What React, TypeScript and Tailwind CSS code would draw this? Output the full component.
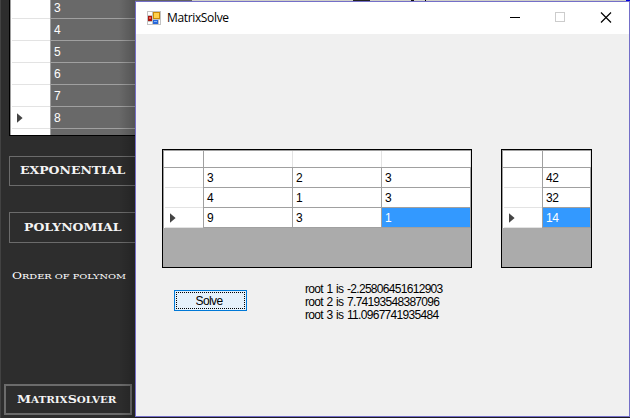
import React from "react";

const sans = "font-['Liberation_Sans',sans-serif]";
const cop = "font-['DejaVu_Serif',serif] font-bold text-[#f4f4f4] whitespace-nowrap";

function Pointer() {
  return (
    <svg width="6" height="10" viewBox="0 0 6 10">
      <path d="M0 0.3L5.6 5L0 9.7Z" fill="#444" />
    </svg>
  );
}

function DarkGrid() {
  return (
    <div className="ml-[9px] h-[136px] overflow-hidden border-b border-l border-black bg-white">
      {[3, 4, 5, 6, 7, 8, ""].map((n, i) => (
        <div key={i} className={`flex ${i === 0 ? "h-[19px]" : "h-[22px]"}`}>
          <div className="flex w-[41px] shrink-0 items-center border-r border-l border-r-[#a0a0a0] border-l-[#a0a0a0] pl-px">
            <div className="flex h-full w-full items-center border-b border-[#e3e3e3] pt-px pl-[5px]">
              {n === 8 && <Pointer />}
            </div>
          </div>
          <div className={`flex grow items-end border-b border-[#a0a0a0] bg-[#696969] pb-[3px] pl-[3px] leading-[14px] text-white ${sans} text-[12px]`}>
            {n}
          </div>
        </div>
      ))}
    </div>
  );
}

function DataGrid({ rows, columns }: { rows: string[][]; columns: string }) {
  return (
    <div className="h-[119px] border border-black bg-[#ababab]">
      <div className={`grid ${columns} h-[18px] border-y border-l border-[#a0a0a0] bg-white`}>
        <div className="border-r border-[#a0a0a0]" />
        {rows[0].map((_, i) => (
          <div key={i} className="border-r border-[#e3e3e3]" />
        ))}
      </div>
      {rows.map((row, r) => (
        <div key={r} className={`grid ${columns} h-5 border-l border-[#a0a0a0] bg-white`}>
          <div className="border-r border-[#a0a0a0] pl-px">
            <div className="flex h-full items-center border-b border-[#e3e3e3] pt-px pl-[5px]">
              {r === 2 && <Pointer />}
            </div>
          </div>
          {row.map((v, c) => (
            <div
              key={c}
              className={`border-r border-b border-[#a0a0a0] pt-[3px] pl-[3px] leading-[14px] ${sans} text-[12px] tracking-[-0.5px] ${r === 2 && c === row.length - 1 ? "bg-[#3399ff] text-white" : "text-black"}`}
            >
              {v}
            </div>
          ))}
        </div>
      ))}
    </div>
  );
}

function FormIcon() {
  return (
    <svg width="14" height="14" viewBox="0 0 14 14">
      <rect width="14" height="14" fill="#c3c3c3" />
      <path d="M1 1h4v3H1zM1 11h4v2H1zM12 9h1v4h-1z" fill="#fff" />
      <rect x="6" y="1" width="7" height="7" fill="#c98908" />
      <rect x="7" y="2" width="5" height="5" fill="#ffd04b" />
      <rect x="1" y="5" width="4" height="5" fill="#a81410" />
      <rect x="2" y="6" width="2" height="2" fill="#f0614d" />
      <rect x="6" y="9" width="5" height="4" fill="#2868d8" />
      <rect x="7" y="10" width="3" height="1" fill="#82b4ff" />
    </svg>
  );
}

export default function App() {
  return (
    <div className="relative flex h-[418px] w-[630px] overflow-hidden bg-[#2d2d2d]">
      <div className="relative h-[418px] w-[135px] overflow-hidden border-l border-[#424242]">
        <div className="-ml-px">
          <DarkGrid />
          <div className="mt-5 ml-[9px] flex h-[30px] items-center border border-r-0 border-[#6b6b6b] pl-[10px]">
            <span className={`${cop} inline-block origin-left scale-x-[1.135] text-[11px] leading-4`}>EXPONENTIAL</span>
          </div>
          <div className="mt-[26px] ml-[9px] flex h-[31px] items-center border border-r-0 border-[#6b6b6b] pl-[14px]">
            <span className={`${cop} inline-block origin-left scale-x-[1.135] text-[11px] leading-4`}>POLYNOMIAL</span>
          </div>
          <div className="mt-[25px] ml-3 h-[15px]">
            <span className="block w-max origin-left scale-x-[1.22] font-['DejaVu_Serif',serif] text-[10px] leading-[15px] font-normal whitespace-nowrap text-white">
              O<span className="text-[8px]">RDER OF POLYNOM</span>
            </span>
          </div>
          <div className="mt-[101px] ml-1 flex h-[31px] w-32 items-center border-2 border-[#6b6b6b] pt-px pl-[11px]">
            <span className={`${cop} inline-block origin-left scale-x-[1.15] text-[11px] leading-4`}>
              M<span className="text-[9px]">ATRIX</span>S<span className="text-[9px]">OLVER</span>
            </span>
          </div>
        </div>
        <div className="absolute inset-y-0 right-0 w-4 bg-gradient-to-r from-transparent to-black/20" />
      </div>

      <div className="flex w-[495px] flex-col bg-[#1d1a22]">
        <div className="flex h-px bg-[#d0d0c8]">
          <div className="w-[57px] bg-[#626262]" />
          <div className="ml-[161px] w-[17px] bg-[#222]" />
          <div className="ml-[41px] w-[3px] bg-[#111]" />
          <div className="ml-[11px] w-px bg-black" />
          <div className="ml-auto w-1 bg-[#0000e0]" />
        </div>
        <div className="flex h-[416px] flex-col border border-[#746fc8] bg-[#f0f0f0]">
          <div className="flex h-8 items-center bg-white pl-[11px]">
            <FormIcon />
            <span className="ml-[6px] font-['Open_Sans','Noto_Sans',sans-serif] text-[12px] leading-4 tracking-[-0.35px] text-black">MatrixSolve</span>
            <svg className="ml-auto" width="120" height="32" viewBox="0 0 120 32" fill="none">
              <path d="M1 15.5h10" stroke="#000" />
              <rect x="46.5" y="10.5" width="9" height="9" stroke="#ccc" />
              <path d="M92 10.5l10 10M102 10.5l-10 10" stroke="#000" strokeWidth="1.2" />
            </svg>
          </div>
          <div className="mt-[115px] flex pl-[26px]">
            <div className="w-[310px]">
              <DataGrid columns="grid-cols-[40px_89px_89px_89px]" rows={[["3", "2", "3"], ["4", "1", "3"], ["9", "3", "1"]]} />
            </div>
            <div className="ml-[29px] w-[91px]">
              <DataGrid columns="grid-cols-[40px_48px]" rows={[["42"], ["32"], ["14"]]} />
            </div>
          </div>
          <div className={`flex pl-[38px] ${sans} text-black`}>
            <button className="mt-[22px] h-[21px] w-[73px] border border-[#0078d7] bg-[#e5f1fb] p-px">
              <span className="flex h-full items-center justify-center border border-dotted border-black pr-[3px] text-[12px] leading-[14px] tracking-[-0.6px]">Solve</span>
            </button>
            <div className="mt-[15px] ml-[58px] text-[12px] leading-[13px] tracking-[-0.7px] [word-spacing:1px] whitespace-nowrap">
              <div>root 1 is -2.25806451612903</div>
              <div>root 2 is 7.74193548387096</div>
              <div>root 3 is 11.0967741935484</div>
            </div>
          </div>
        </div>
      </div>
    </div>
  );
}
